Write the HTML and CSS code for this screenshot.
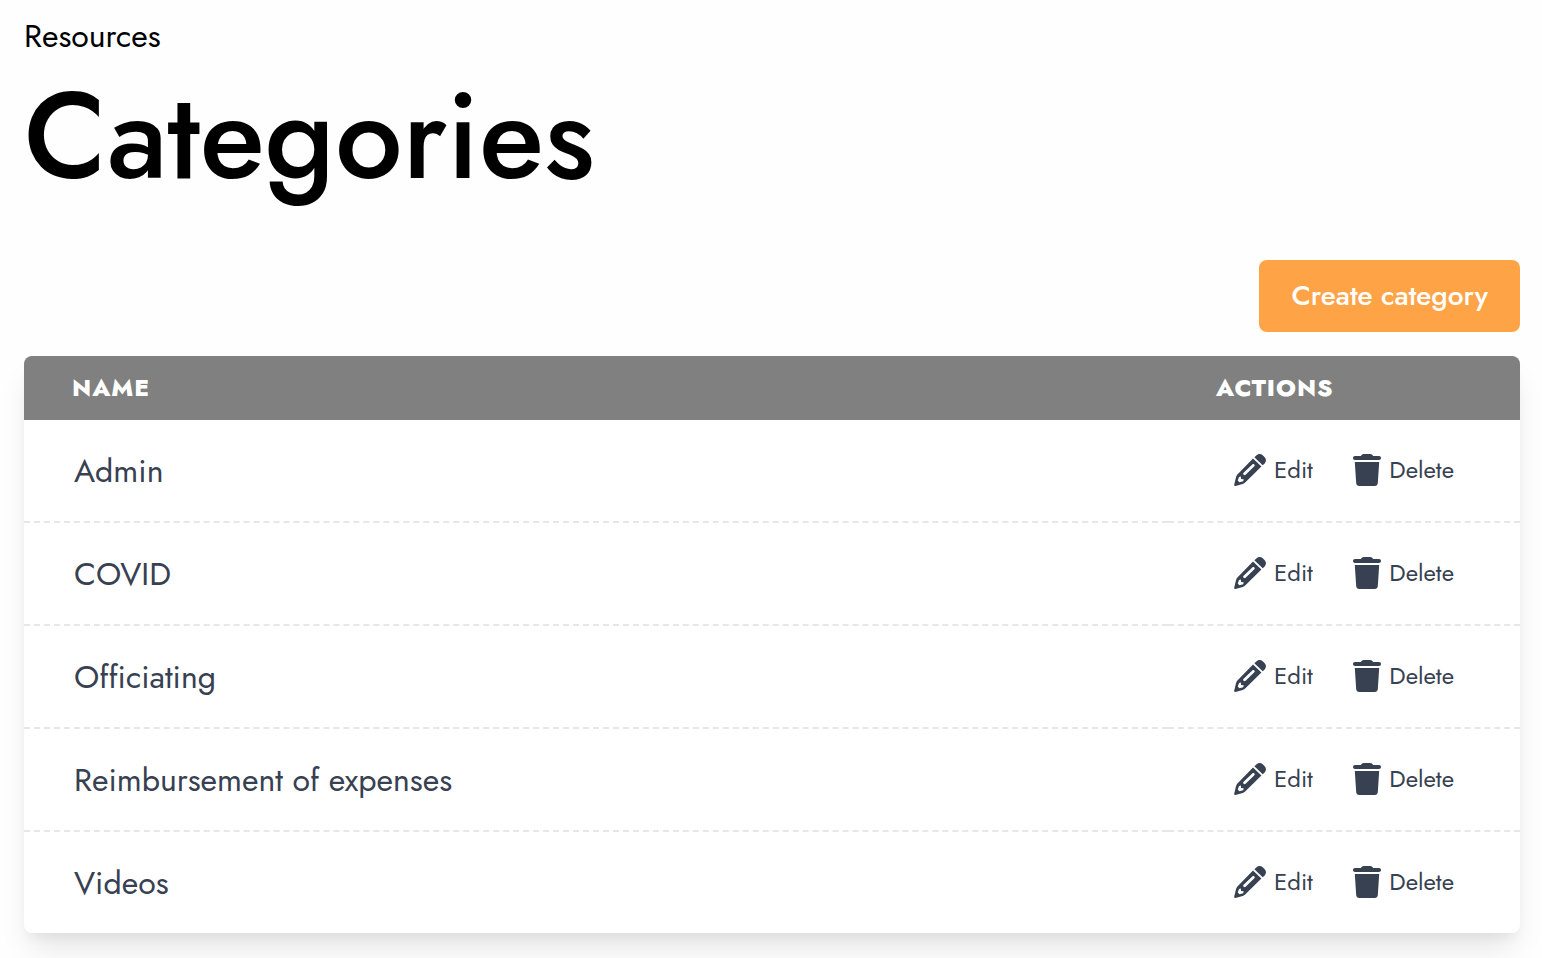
FILE: index.html
```html
<!DOCTYPE html>
<html lang="en">
<head>
    <meta charset="UTF-8">
    <meta name="viewport" content="width=device-width, initial-scale=1.0">
    <title>Categories - Resources</title>
    <link rel="stylesheet" href="styles.css">
</head>
<body>

    <!-- Icons shared by every row -->
    <svg class="sprite" aria-hidden="true">
        <symbol id="icon-edit" viewBox="0 0 32 32">
            <path fill-rule="evenodd" d="M19 4.4L27.4 12.4L11.4 28.2C10.2 29.3 9.2 29.8 7.8 30.2L1.4 31.9C.5 32.1 0 31.5.2 30.7L1.8 23.9C2.2 22.4 2.8 21.2 3.9 20.1ZM5 23L3.8 26.6L5.4 28.3L9.2 27.2L9.7 25.2L7 24.9L6.9 22.6ZM9.6 18.7C9 19.4 9 20.2 9.6 20.7C10.2 21.3 11 21.3 11.6 20.7L20.3 12.3C20.9 11.7 20.9 10.9 20.3 10.4C19.7 9.8 18.9 9.8 18.3 10.4Z"/>
            <path d="M20.4 3.2L22.6 1.3C24.4-.4 26.9-.4 28.7 1.3L30.7 3.3C32.4 5.1 32.4 7.6 30.7 9.4L28.7 11.2Z"/>
        </symbol>
        <symbol id="icon-delete" viewBox="0 0 28 32">
            <path d="M8.6 1C9.2.3 10 0 10.8 0H17.2C18 0 18.8.3 19.4 1L20.2 2H26C27.2 2 28 2.9 28 4S27.2 6 26 6H2C.8 6 0 5.1 0 4S.8 2 2 2H7.8Z"/>
            <path d="M1.8 8H26.2L24.8 29.2C24.7 30.8 23.4 32 21.8 32H6.2C4.6 32 3.3 30.8 3.2 29.2Z"/>
        </symbol>
    </svg>

    <div class="page">
        <div class="header">
            <p class="section">Resources</p>
            <h1>Categories</h1>
        </div>

        <div class="toolbar">
            <button type="button" class="create-button">Create category</button>
        </div>

        <table class="categories">
            <thead>
                <tr>
                    <th>Name</th>
                    <th class="actions-column">Actions</th>
                </tr>
            </thead>
            <tbody>
                <tr>
                    <td class="name">Admin</td>
                    <td>
                        <div class="actions">
                            <a href="#edit"><svg class="icon icon-edit" aria-hidden="true"><use href="#icon-edit"/></svg>Edit</a>
                            <a href="#delete"><svg class="icon icon-delete" aria-hidden="true"><use href="#icon-delete"/></svg>Delete</a>
                        </div>
                    </td>
                </tr>
                <tr>
                    <td class="name">COVID</td>
                    <td>
                        <div class="actions">
                            <a href="#edit"><svg class="icon icon-edit" aria-hidden="true"><use href="#icon-edit"/></svg>Edit</a>
                            <a href="#delete"><svg class="icon icon-delete" aria-hidden="true"><use href="#icon-delete"/></svg>Delete</a>
                        </div>
                    </td>
                </tr>
                <tr>
                    <td class="name">Officiating</td>
                    <td>
                        <div class="actions">
                            <a href="#edit"><svg class="icon icon-edit" aria-hidden="true"><use href="#icon-edit"/></svg>Edit</a>
                            <a href="#delete"><svg class="icon icon-delete" aria-hidden="true"><use href="#icon-delete"/></svg>Delete</a>
                        </div>
                    </td>
                </tr>
                <tr>
                    <td class="name">Reimbursement of expenses</td>
                    <td>
                        <div class="actions">
                            <a href="#edit"><svg class="icon icon-edit" aria-hidden="true"><use href="#icon-edit"/></svg>Edit</a>
                            <a href="#delete"><svg class="icon icon-delete" aria-hidden="true"><use href="#icon-delete"/></svg>Delete</a>
                        </div>
                    </td>
                </tr>
                <tr>
                    <td class="name">Videos</td>
                    <td>
                        <div class="actions">
                            <a href="#edit"><svg class="icon icon-edit" aria-hidden="true"><use href="#icon-edit"/></svg>Edit</a>
                            <a href="#delete"><svg class="icon icon-delete" aria-hidden="true"><use href="#icon-delete"/></svg>Delete</a>
                        </div>
                    </td>
                </tr>
            </tbody>
        </table>
    </div>

</body>
</html>
```
FILE: styles.css
```css
body {
    margin: 0;
    font-family: "Jost", "Lato", sans-serif;
    color: #000000;
    background-color: #FEFEFE;
}

.sprite {
    display: none;
}

.page {
    padding: 12px 22px 25px 24px;
}

.section {
    margin: 0;
    font-size: 32px;
    line-height: 48px;
}

h1 {
    margin: 12px 0 0;
    font-size: 120px;
    line-height: 130px;
    font-weight: 500;
}

.toolbar {
    display: flex;
    justify-content: flex-end;
    margin: 58px 0 24px;
}

.create-button {
    padding: 16px 32px;
    border: none;
    border-radius: 8px;
    background-color: #FFA347; /* Orange */
    color: #FFFFFF;
    font-family: inherit;
    font-size: 28px;
    line-height: 40px;
    font-weight: 500;
    cursor: pointer;
}

.categories {
    width: 100%;
    border-spacing: 0;
    border-radius: 8px;
    overflow: hidden;
    background-color: #FFFFFF;
    color: #374151; /* Slate */
    box-shadow: 0 20px 30px -6px rgba(0, 0, 0, 0.1), 0 8px 12px -4px rgba(0, 0, 0, 0.05);
}

.categories th {
    padding: 16px 48px;
    background-color: #808080;
    color: #FFFFFF;
    font-size: 24px;
    line-height: 32px;
    font-weight: 800;
    letter-spacing: 1px;
    text-align: left;
    text-transform: uppercase;
}

.categories .actions-column {
    width: 256px;
}

.categories td {
    height: 99px;
    padding: 0 66px 2px;
    border-bottom: 2px dashed #E5E7EB;
}

.categories .name {
    height: 101px;
    padding: 0 50px;
    font-size: 32px;
}

.categories tr:last-child td {
    border-bottom: none;
}

.actions {
    display: flex;
    justify-content: space-between;
}

.actions a {
    display: flex;
    align-items: center;
    gap: 8px;
    color: inherit;
    font-size: 24px;
    line-height: 32px;
    text-decoration: none;
}

.icon {
    height: 32px;
    fill: #374151;
}

.icon-edit {
    width: 32px;
}

.icon-delete {
    width: 28px;
}
```
